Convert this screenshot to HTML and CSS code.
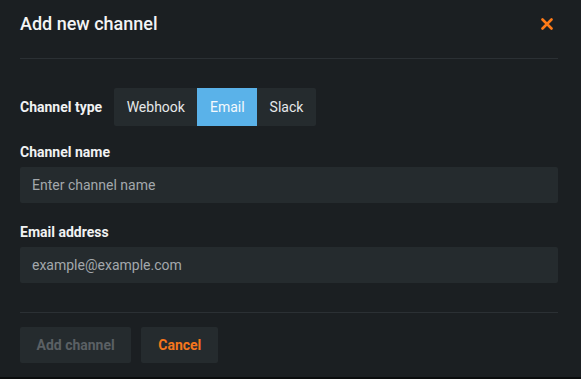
FILE: index.html
```html
<!DOCTYPE html>
<html lang="en">
<head>
<meta charset="utf-8">
<title>Add new channel</title>
<link rel="stylesheet" href="styles.css">
</head>
<body>
<div class="modal">
  <header class="modal-header">
    <h1 class="modal-title">Add new channel</h1>
    <button class="close-btn" aria-label="Close">
      <svg width="12" height="12" viewBox="0 0 12 12"><path d="M1.5 1.5 L10.5 10.5 M10.5 1.5 L1.5 10.5" stroke="#ff7a17" stroke-width="2.6" stroke-linecap="round"/></svg>
    </button>
  </header>
  <div class="modal-body">
    <div class="type-row">
      <span class="label">Channel type</span>
      <div class="segmented">
        <button class="seg">Webhook</button>
        <button class="seg active">Email</button>
        <button class="seg">Slack</button>
      </div>
    </div>
    <div class="field">
      <label class="label">Channel name</label>
      <input class="input" type="text" placeholder="Enter channel name">
    </div>
    <div class="field field-second">
      <label class="label">Email address</label>
      <input class="input" type="text" placeholder="example@example.com">
    </div>
  </div>
  <footer class="modal-footer">
    <button class="btn btn-disabled">Add channel</button>
    <button class="btn btn-cancel">Cancel</button>
  </footer>
</div>
</body>
</html>
```

FILE: styles.css
```css
* { box-sizing: border-box; }
html, body { margin: 0; padding: 0; }
body {
  background: #0b0d0e;
  font-family: Roboto, "Liberation Sans", Arial, sans-serif;
  color: #eef0f2;
  height: 379px;
  overflow: hidden;
}
.modal {
  background: #1b1f22;
  height: 377px;
  padding: 0 23px 0 20px;
}
.modal-header {
  display: flex;
  justify-content: space-between;
  align-items: flex-start;
  height: 59px;
  border-bottom: 1px solid #2b3034;
  padding-top: 13px;
}
.modal-title {
  margin: 0;
  font-size: 18px;
  line-height: 22px;
  font-weight: 500;
  color: #f3f4f5;
}
.close-btn {
  background: none;
  border: 0;
  padding: 0;
  margin: 5px 5px 0 0;
  width: 12px;
  height: 12px;
  display: flex;
  cursor: pointer;
}
.modal-body {
  padding-top: 29px;
  padding-bottom: 29px;
  border-bottom: 1px solid #2b3034;
}
.type-row {
  display: flex;
  align-items: center;
  gap: 12px;
}
.label {
  display: block;
  font-size: 14px;
  line-height: 16px;
  font-weight: 700;
  color: #f1f2f3;
  white-space: nowrap;
}
.segmented {
  display: flex;
  background: #252b2e;
  border-radius: 2px;
  overflow: hidden;
  height: 38px;
}
.seg {
  border: 0;
  background: transparent;
  font-family: inherit;
  font-size: 14px;
  color: #e6e8ea;
  padding: 0 12.5px;
  height: 38px;
  cursor: pointer;
  white-space: nowrap;
}
.seg.active {
  background: #5ab2e9;
  color: #f4f9fd;
}
.field { margin-top: 18px; }
.field-second { margin-top: 21px; }
.field .label { margin-bottom: 7px; }
.input {
  display: block;
  width: 100%;
  height: 36px;
  border: 0;
  border-radius: 2px;
  background: #252b2e;
  padding: 0 12px;
  font-family: inherit;
  font-size: 14px;
  color: #e6e8ea;
  outline: none;
}
.input::placeholder { color: #a3a8ac; opacity: 1; }
.modal-footer {
  display: flex;
  gap: 10px;
  padding-top: 14px;
}
.btn {
  height: 36px;
  border: 0;
  border-radius: 2px;
  background: #252b2e;
  padding: 0 16.5px;
  font-family: inherit;
  font-size: 14px;
  font-weight: 700;
  white-space: nowrap;
  cursor: pointer;
}
.btn-disabled { color: #5b6064; }
.btn-cancel { color: #f5761c; padding: 0 17px; }
```
